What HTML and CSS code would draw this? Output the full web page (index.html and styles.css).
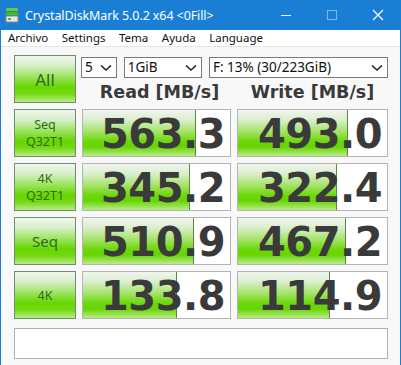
FILE: index.html
```html
<!DOCTYPE html>
<html lang="en">
<head>
  <meta charset="UTF-8" />
  <title>CrystalDiskMark 5.0.2 x64 &lt;0Fill&gt;</title>
  <link rel="stylesheet" href="styles.css">
</head>
<body>
  <div class="window">
    <div class="titlebar">
      <svg class="app-icon" width="14" height="16" viewBox="0 0 14 16">
        <rect x="1" y="1" width="12" height="3" fill="#5fcf2a"/>
        <rect x="1" y="5" width="12" height="3" fill="#49b81c"/>
        <rect x="1" y="9" width="12" height="6" fill="#e8e8e8" stroke="#8a8a8a" stroke-width="1"/>
        <rect x="3" y="11" width="3" height="2" fill="#45c01a"/>
      </svg>
      <span class="title">CrystalDiskMark 5.0.2 x64 &lt;0Fill&gt;</span>
      <div class="controls">
        <svg width="12" height="12" viewBox="0 0 12 12"><line x1="1" y1="6.5" x2="11" y2="6.5" stroke="#fff" stroke-width="1"/></svg>
        <svg width="12" height="12" viewBox="0 0 12 12"><rect x="1.5" y="1.5" width="9" height="9" fill="none" stroke="#fff" stroke-width="1" opacity="0.45"/></svg>
        <svg width="12" height="12" viewBox="0 0 12 12"><path d="M1 1 L11 11 M11 1 L1 11" stroke="#fff" stroke-width="1.2"/></svg>
      </div>
    </div>

    <div class="menubar">
      <span>Archivo</span>
      <span>Settings</span>
      <span>Tema</span>
      <span>Ayuda</span>
      <span>Language</span>
    </div>

    <div class="main">
      <div class="grid">
        <div class="btn btn-all">All</div>
        <div class="top-right">
          <div class="combos">
            <div class="combo combo-count">5<svg class="chev" width="12" height="8" viewBox="0 0 12 8"><polyline points="1,1.5 6,6 11,1.5" fill="none" stroke="#222" stroke-width="1.6"/></svg></div>
            <div class="combo combo-size">1GiB<svg class="chev" width="12" height="8" viewBox="0 0 12 8"><polyline points="1,1.5 6,6 11,1.5" fill="none" stroke="#222" stroke-width="1.6"/></svg></div>
            <div class="combo combo-drive">F: 13% (30/223GiB)<svg class="chev" width="12" height="8" viewBox="0 0 12 8"><polyline points="1,1.5 6,6 11,1.5" fill="none" stroke="#222" stroke-width="1.6"/></svg></div>
          </div>
          <div class="headers">
            <div class="head">Read [MB/s]</div>
            <div class="head">Write [MB/s]</div>
          </div>
        </div>

        <div class="btn"><span>Seq</span><span>Q32T1</span></div>
        <div class="value"><div class="bar" style="width: 76%"></div><span>563.3</span></div>
        <div class="value"><div class="bar" style="width: 73%"></div><span>493.0</span></div>

        <div class="btn"><span>4K</span><span>Q32T1</span></div>
        <div class="value"><div class="bar" style="width: 72%"></div><span>345.2</span></div>
        <div class="value"><div class="bar" style="width: 66%"></div><span>322.4</span></div>

        <div class="btn btn-big">Seq</div>
        <div class="value"><div class="bar" style="width: 75%"></div><span>510.9</span></div>
        <div class="value"><div class="bar" style="width: 72%"></div><span>467.2</span></div>

        <div class="btn">4K</div>
        <div class="value"><div class="bar" style="width: 63%"></div><span>133.8</span></div>
        <div class="value"><div class="bar" style="width: 61%"></div><span>114.9</span></div>
      </div>

      <div class="status"></div>
    </div>
  </div>
</body>
</html>
```

FILE: styles.css
```css
body { margin: 0; font-family: "Noto Sans", "Open Sans", sans-serif; }
.window { width: 401px; height: 365px; box-sizing: border-box; border-left: 1px solid #1a7fd4; border-right: 1px solid #1a7fd4; background: #f8f8f8; overflow: hidden; }

.titlebar { height: 30px; background: #1a7fd4; display: flex; align-items: center; color: #fff; margin: 0 -1px; padding-left: 5px; }
.app-icon { flex: none; }
.title { margin-left: 6px; font-size: 12.5px; letter-spacing: -0.1px; }
.controls { margin-left: auto; display: flex; }
.controls svg { width: 46px; height: 12px; }

.menubar { height: 15px; background: #fff; display: flex; font-size: 11.5px; color: #111; padding: 1px 0 0 7px; border-bottom: 1px solid #e6e6e6; line-height: 14px; }
.menubar span { margin-right: 13.5px; }

.main { padding: 8px 13px 0 13px; }
.grid { display: grid; grid-template-columns: 62px 149px 151px; column-gap: 6px; row-gap: 6px; grid-auto-rows: 48px; }

.btn { box-sizing: border-box; border: 1px solid #6f8d6f; background: linear-gradient(#f2f7ef 0%, #d6efc6 22%, #8ee24a 50%, #66d600 68%, #74d812 82%, #b6ec84 100%); color: #2f6a16; display: flex; flex-direction: column; align-items: center; justify-content: center; font-size: 12.5px; line-height: 17px; }
.btn-all { font-size: 17px; }
.btn-big { font-size: 15px; }

.top-right { grid-column: 2 / 4; display: flex; flex-direction: column; }
.combos { display: flex; gap: 7px; margin-top: 2px; margin-left: -1px; }
.combo { box-sizing: border-box; height: 21px; border: 1px solid #7a7a7a; background: #fff; font-size: 13.5px; line-height: 19px; padding-left: 3px; display: flex; align-items: center; color: #111; }
.chev { margin-left: auto; margin-right: 4px; }
.combo-count { width: 36px; }
.combo-size { width: 79px; }
.combo-drive { width: 181px; }
.headers { display: flex; margin-top: 4px; }
.head { font-family: "DejaVu Sans", sans-serif; font-weight: bold; font-size: 17.5px; color: #3a3a3a; text-align: center; }
.head:first-child { width: 155px; }
.head:last-child { width: 151px; }

.value { position: relative; box-sizing: border-box; border: 1px solid #b4b4b4; background: #fff; display: flex; align-items: center; justify-content: flex-end; padding-right: 5px; padding-top: 2px; overflow: hidden; }
.bar { position: absolute; left: 0; top: 0; bottom: 0; background: linear-gradient(#f0f5ee 0%, #dcefd0 20%, #a8e46e 45%, #6cd80a 68%, #66d400 80%, #b8ec86 100%); border-right: 1px solid #5a8a40; }
.value span { position: relative; font-family: "DejaVu Sans", sans-serif; font-weight: bold; font-size: 40px; color: #3a3a3a; letter-spacing: -0.5px; }

.status { margin-top: 9px; height: 31px; width: 374px; box-sizing: border-box; border: 1px solid #b0b0b0; background: #fff; }
```
